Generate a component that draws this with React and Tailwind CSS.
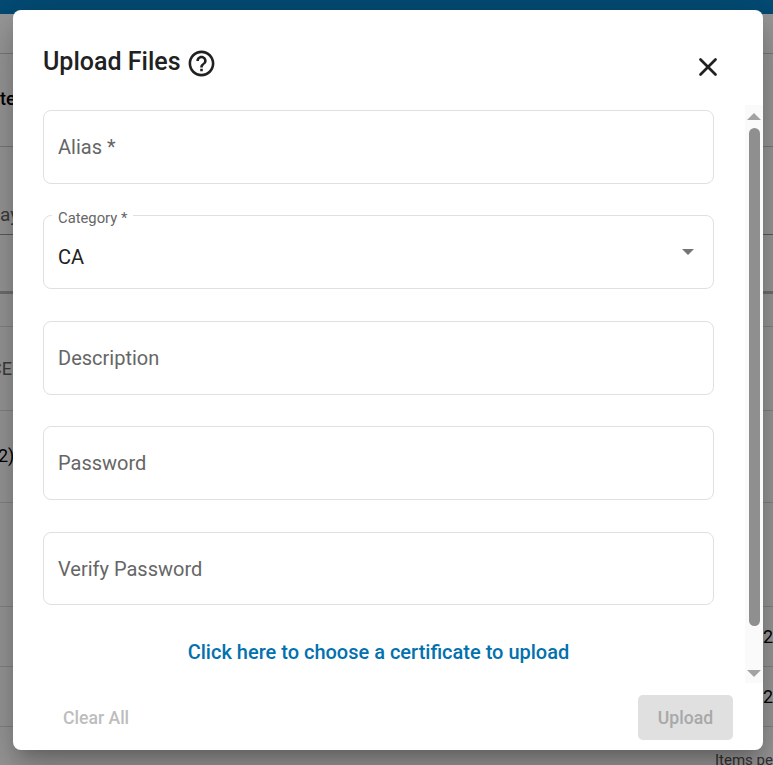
import { X } from "lucide-react";

const font = { fontFamily: "Roboto, sans-serif" };

function Field({ label, value, arrow, short }) {
  const height = short ? "h-[73px]" : "h-[74px]";
  if (value) {
    return (
      <div className={`relative flex items-center rounded-[8px] border border-[#e0e0e0] px-[14px] pt-[10px] text-[20px] text-[#212121] ${height}`}>
        <span className="absolute left-[8px] top-[-7px] bg-white px-[6px] text-[14.8px] leading-[18px] text-[#666666]">{label}</span>
        <span>{value}</span>
        {arrow && <span className="absolute right-[19px] top-[33px] h-0 w-0 border-x-[6px] border-t-[6px] border-x-transparent border-t-[#757575]" />}
      </div>
    );
  }
  return (
    <div className={`flex items-center rounded-[8px] border border-[#e0e0e0] px-[14px] text-[20px] text-[#666666] ${height}`}>
      {label}
    </div>
  );
}

function Scrollbar() {
  return (
    <div className="flex w-[18px] flex-col items-center bg-[#fafafa]">
      <span className="mt-[8px] h-0 w-0 border-x-[7px] border-b-[7px] border-x-transparent border-b-[#a3a3a3]" />
      <span className="mt-[8px] h-[498px] w-[11px] rounded-full bg-[#8f8f8f]" />
      <span className="mt-[44px] h-0 w-0 border-x-[7px] border-t-[7px] border-x-transparent border-t-[#a3a3a3]" />
    </div>
  );
}

export default function App() {
  return (
    <div className="relative h-[765px] w-[773px] overflow-hidden bg-white" style={font}>
      {/* page behind the dialog */}
      <div className="h-[14px] bg-[#077ec1]" />
      <div className="h-[40px] border-b border-[#cccccc]" />
      <div className="flex h-[93px] items-center border-b border-[#cccccc] pb-[3px] text-[18px] font-medium text-black">te</div>
      <div className="flex h-[88px] items-end overflow-hidden whitespace-nowrap border-b border-[#999999] pb-[5px] text-[19px] text-[#666666]">ay</div>
      <div className="h-[59px] border-b-[3px] border-[#bbbbbb]" />
      <div className="h-[32px]" />
      <div className="flex h-[85px] items-center overflow-hidden border-y border-[#dddddd] text-[18px] text-[#666666]"><span className="ml-[-10px]">CE</span></div>
      <div className="flex h-[92px] items-center overflow-hidden border-b border-[#dddddd] pb-[2px] text-[18px] text-black"><span className="ml-[-2px]">2)</span></div>
      <div className="h-[104px] border-b border-[#dddddd]" />
      <div className="flex h-[60px] items-center justify-end border-b border-[#dddddd] text-[18px] text-black">2</div>
      <div className="flex h-[60px] items-center justify-end border-b border-[#dddddd] text-[18px] text-black">2</div>
      <div className="h-[39px] overflow-hidden whitespace-nowrap pl-[715px] pt-[24px] text-[15px] leading-[18px] text-[#555555]">Items pe</div>

      {/* dialog */}
      <div className="absolute inset-0 bg-black/40 pl-[13px] pt-[10px]">
        <div className="flex h-[740px] w-[750px] flex-col rounded-[8px] bg-white shadow-[0_11px_15px_-7px_rgba(0,0,0,0.2),0_24px_38px_3px_rgba(0,0,0,0.14),0_9px_46px_8px_rgba(0,0,0,0.12)]">
          <div className="flex h-[95px] items-start justify-between pl-[30px] pr-[40px] pt-[34px]">
            <div className="flex items-center gap-[5px]">
              <h2 className="text-[25px] font-medium leading-[34px] text-[#212121]">Upload Files</h2>
              <svg width="31" height="31" viewBox="0 0 24 24" className="mt-[4px] fill-[#212121]">
                <path d="M11 18h2v-2h-2v2zm1-16C6.48 2 2 6.48 2 12s4.48 10 10 10 10-4.48 10-10S17.52 2 12 2zm0 18c-4.41 0-8-3.59-8-8s3.59-8 8-8 8 3.59 8 8-3.59 8-8 8zm0-14c-2.21 0-4 1.79-4 4h2c0-1.1.9-2 2-2s2 .9 2 2c0 2-3 1.75-3 5h2c0-2.25 3-2.5 3-5 0-2.21-1.79-4-4-4z" />
              </svg>
            </div>
            <X size={30} strokeWidth={2.2} className="mt-[8px] text-[#212121]" />
          </div>

          <div className="flex h-[578px] gap-[31px] pl-[30px]">
            <div className="flex w-[671px] flex-col pt-[5px]">
              <Field label="Alias *" />
              <div className="mt-[31px]"><Field label="Category *" value="CA" arrow /></div>
              <div className="mt-[32px]"><Field label="Description" /></div>
              <div className="mt-[31px]"><Field label="Password" /></div>
              <div className="mt-[32px]"><Field label="Verify Password" short /></div>
              <a className="mt-[33px] text-center text-[20px] font-medium leading-[28px] text-[#0271ad]">Click here to choose a certificate to upload</a>
            </div>
            <Scrollbar />
          </div>

          <div className="flex items-start justify-between pl-[50px] pr-[30px] pt-[12px]">
            <button className="h-[45px] pt-[2px] text-[17.6px] font-medium text-[#bdbdbd]">Clear All</button>
            <button className="h-[45px] w-[95px] rounded-[5px] bg-[#e0e0e0] pt-[2px] text-[17.6px] font-medium text-[#a8a8a8]">Upload</button>
          </div>
        </div>
      </div>
    </div>
  );
}
